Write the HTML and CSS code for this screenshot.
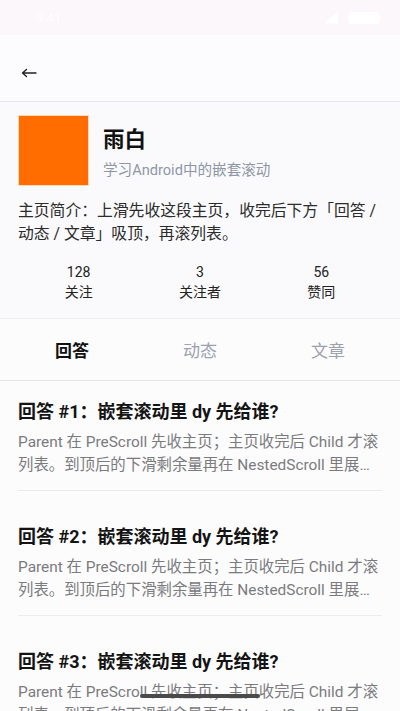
FILE: index.html
```html
<!DOCTYPE html>
<html lang="zh-CN">

<head>
    <meta charset="UTF-8">
    <meta name="viewport" content="width=device-width, initial-scale=1.0">
    <title>雨白</title>
    <link rel="stylesheet" href="styles.css">
</head>

<body>

    <div class="screen">
        <div class="statusBar">
            <span class="time">9:41</span>
            <span class="icons">
                <i class="sig"></i>
                <i class="batt"></i>
            </span>
        </div>

        <div class="toolbar">
            <svg class="back" width="16" height="12" viewBox="0 0 16 12">
                <path d="M1.5 6H15M1.5 6L5.5 2.5M1.5 6L5.5 9.5" fill="none" stroke="#222" stroke-width="1.4" stroke-linecap="round" />
            </svg>
        </div>

        <div class="profile">
            <div class="top">
                <div class="avatar"></div>
                <div class="info">
                    <p class="name">雨白</p>
                    <p class="sub">学习Android中的嵌套滚动</p>
                </div>
            </div>
            <p class="bio">主页简介：上滑先收这段主页，收完后下方「回答 / 动态 / 文章」吸顶，再滚列表。</p>
            <div class="stats">
                <div class="stat"><span>128</span>关注</div>
                <div class="stat"><span>3</span>关注者</div>
                <div class="stat"><span>56</span>赞同</div>
            </div>
        </div>

        <div class="tabs">
            <div class="tab active">回答</div>
            <div class="tab">动态</div>
            <div class="tab">文章</div>
        </div>

        <div class="list">
            <div class="item">
                <h3>回答 #1：嵌套滚动里 dy 先给谁?</h3>
                <p>Parent 在 PreScroll 先收主页；主页收完后 Child 才滚列表。到顶后的下滑剩余量再在 NestedScroll 里展开主页。</p>
            </div>
            <div class="item">
                <h3>回答 #2：嵌套滚动里 dy 先给谁?</h3>
                <p>Parent 在 PreScroll 先收主页；主页收完后 Child 才滚列表。到顶后的下滑剩余量再在 NestedScroll 里展开主页。</p>
            </div>
            <div class="item">
                <h3>回答 #3：嵌套滚动里 dy 先给谁?</h3>
                <p>Parent 在 PreScroll 先收主页；主页收完后 Child 才滚列表。到顶后的下滑剩余量再在 NestedScroll 里展开主页。</p>
            </div>
        </div>

        <div class="homeBar"></div>
    </div>

</body>

</html>
```

FILE: styles.css
```css
* {
    margin: 0;
    padding: 0;
    box-sizing: border-box;
}

html,
body {
    width: 100%;
    height: 100%;
    font-family: Roboto, "Noto Sans CJK SC", sans-serif;
    background-color: #fafafc;
    overflow: hidden;
}

.screen {
    position: relative;
    width: 400px;
    height: 711px;
    overflow: hidden;
}

.statusBar {
    height: 35px;
    background-color: #fbf7fb;
    display: flex;
    align-items: center;
    justify-content: space-between;
    padding: 0 20px 0 36px;
    color: #fff;
    font-size: 13px;
}

.statusBar .icons {
    display: flex;
    align-items: center;
    gap: 10px;
}

.statusBar .sig {
    width: 14px;
    height: 12px;
    background-color: #fff;
    clip-path: polygon(100% 0, 100% 100%, 0 100%);
}

.statusBar .batt {
    width: 32px;
    height: 12px;
    border-radius: 4px;
    background-color: #fff;
}

.toolbar {
    height: 67px;
    background-color: #fcfbfd;
    border-bottom: 1px solid #e7e6ea;
    display: flex;
    align-items: center;
    padding-left: 21px;
}

.back {
    margin-top: 9px;
}

.profile {
    padding: 13px 18px 15px;
    border-bottom: 1px solid #efeef2;
}

.top {
    display: flex;
    align-items: flex-start;
    gap: 14px;
}

.avatar {
    width: 71px;
    height: 71px;
    background-color: #ff6c00;
    border: 1px solid #ffd9b8;
}

.info {
    padding-top: 10px;
}

.name {
    font-size: 21.5px;
    font-weight: 700;
    line-height: 30px;
    color: #111;
}

.sub {
    margin-top: 4px;
    font-size: 14.6px;
    line-height: 22px;
    color: #8e97a6;
}

.bio {
    margin-top: 13px;
    font-size: 15.8px;
    line-height: 23px;
    color: #2b2b2b;
}

.stats {
    margin-top: 17px;
    display: flex;
}

.stat {
    flex: 1;
    display: flex;
    flex-direction: column;
    align-items: center;
    font-size: 14px;
    line-height: 21px;
    color: #222;
}

.stat span {
    line-height: 20px;
}

.tabs {
    height: 62px;
    display: flex;
    padding: 0 8px;
    border-bottom: 1px solid #e6e6ea;
    background-color: #fcfcfd;
}

.tab {
    flex: 1;
    display: flex;
    align-items: center;
    justify-content: center;
    font-size: 17px;
    color: #9ba2b0;
}

.tab.active {
    color: #111;
    font-weight: 700;
}

.list {
    padding: 0 18px;
    background-color: #fcfcfd;
}

.item {
    padding: 33px 0 13px;
    border-bottom: 1px solid #ebebee;
}

.item:first-child {
    padding-top: 18px;
}

.item h3 {
    font-size: 18px;
    font-weight: 700;
    line-height: 26px;
    color: #141414;
}

.item p {
    margin-top: 6px;
    font-size: 15.4px;
    line-height: 23px;
    color: #7b7b7e;
    display: -webkit-box;
    -webkit-line-clamp: 2;
    -webkit-box-orient: vertical;
    overflow: hidden;
}

.homeBar {
    position: absolute;
    left: 140px;
    bottom: 13px;
    width: 120px;
    height: 4px;
    border-radius: 2px;
    background-color: #4a4a4a;
}
```
